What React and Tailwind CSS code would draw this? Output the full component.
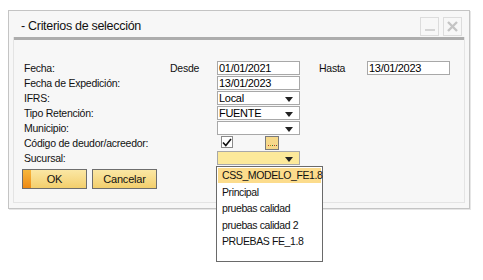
import React from "react";

const font = { fontFamily: '"Liberation Sans", Arial, sans-serif' };

function Arrow() {
  return (
    <svg width="8" height="5" viewBox="0 0 8 5" className="absolute right-[6px] top-[5px]">
      <polygon points="0,0 8,0 4,5" fill="#222" />
    </svg>
  );
}

function Input({ value }) {
  return (
    <div className="h-[14px] w-[83px] border border-[#a8a8a8] bg-white pl-[1px] text-[11px] leading-[12px] tracking-[-0.3px] text-black">
      {value}
    </div>
  );
}

function Select({ value, yellow }) {
  return (
    <div
      className={
        "relative h-[14px] w-[83px] border border-[#a8a8a8] pl-[1px] text-[11px] leading-[12px] tracking-[-0.3px] text-black " +
        (yellow ? "bg-[#fce99a]" : "bg-white")
      }
    >
      {value}
      <Arrow />
    </div>
  );
}

function Row({ label, children }) {
  return (
    <div className="flex h-[15px] items-start">
      <div className="w-[193px] text-[10.5px] leading-[14px] tracking-[-0.25px] text-[#111]">{label}</div>
      {children}
    </div>
  );
}

export default function App() {
  return (
    <div className="h-[280px] w-[483px] bg-white" style={font}>
      <div className="relative ml-[8px] pt-[10px]">
        <div className="w-[462px] border border-[#c4c4c4] bg-[#f7f7f7] shadow-[1px_1px_0_#e6e6e6]">
          {/* title bar */}
          <div className="flex h-[26px] items-center justify-between pl-[12px] pr-[7px]">
            <div className="pt-[4px] text-[12.5px] tracking-[-0.3px] text-[#111]">- Criterios de selección</div>
            <div className="flex gap-[4px] pt-[4px]">
              <div className="relative h-[19px] w-[19px] border border-[#dcdcdc] bg-[#f7f7f7]">
                <div className="absolute bottom-[4px] left-[4px] h-[2px] w-[10px] bg-[#d4d4d4]" />
              </div>
              <div className="flex h-[19px] w-[19px] items-center justify-center border border-[#dcdcdc] bg-[#f7f7f7]">
                <svg width="11" height="11" viewBox="0 0 11 11">
                  <path d="M1 1 L10 10 M10 1 L1 10" stroke="#c4c4c4" strokeWidth="2.4" />
                </svg>
              </div>
            </div>
          </div>
          {/* content */}
          <div className="mx-[4px] mb-[5px] border-x border-b border-[#e4e4e4]">
            <div className="h-[3px] bg-[#adadad]" />
            <div className="pl-[10px] pt-[21px] pb-[13px]">
              <Row
                label={
                  <div className="flex">
                    <span className="w-[146px]">Fecha:</span>
                    <span>Desde</span>
                  </div>
                }
              >
                <Input value="01/01/2021" />
                <div className="w-[19px]" />
                <div className="w-[48px] text-[10.5px] leading-[14px] tracking-[-0.25px] text-[#111]">Hasta</div>
                <Input value="13/01/2023" />
              </Row>
              <Row label="Fecha de Expedición:">
                <Input value="13/01/2023" />
              </Row>
              <Row label="IFRS:">
                <Select value="Local" />
              </Row>
              <Row label="Tipo Retención:">
                <Select value="FUENTE" />
              </Row>
              <Row label="Municipio:">
                <Select value="" />
              </Row>
              <Row label="Código de deudor/acreedor:">
                <div className="ml-[4px] flex h-[12px] w-[12px] items-center justify-center border border-[#8a8a8a] bg-white">
                  <svg width="10" height="9" viewBox="0 0 10 9">
                    <path d="M1 4.5 L3.8 7.5 L9 1" stroke="#111" strokeWidth="1.6" fill="none" />
                  </svg>
                </div>
                <div className="ml-[32px] flex h-[14px] w-[14px] items-end justify-center border border-[#7a7a7a] bg-[#f6d98a] pb-[3px]">
                  <div className="flex gap-[1px]">
                    <div className="h-[1px] w-[1px] bg-[#c0392b]" />
                    <div className="h-[1px] w-[1px] bg-[#b8860b]" />
                    <div className="h-[1px] w-[1px] bg-[#2e7d32]" />
                    <div className="h-[1px] w-[1px] bg-[#c0392b]" />
                    <div className="h-[1px] w-[1px] bg-[#555]" />
                  </div>
                </div>
              </Row>
              <Row label="Sucursal:">
                <Select value="" yellow />
              </Row>
              <div className="mt-[3px] flex gap-[5px]" style={{ marginLeft: "-2px" }}>
                <div className="relative flex h-[20px] w-[65px] items-center justify-center overflow-hidden border border-[#6e6e6e] bg-gradient-to-b from-[#fbe7a4] to-[#f3cf6c] text-[11px] tracking-[-0.2px] text-[#111]">
                  <div className="absolute bottom-0 left-0 top-0 w-[8px] bg-gradient-to-b from-[#f6b73c] to-[#ee8a12]" />
                  <span className="relative">OK</span>
                </div>
                <div className="flex h-[20px] w-[65px] items-center justify-center border border-[#6e6e6e] bg-gradient-to-b from-[#fbe7a4] to-[#f3cf6c] text-[11px] tracking-[-0.2px] text-[#111]">
                  Cancelar
                </div>
              </div>
            </div>
          </div>
        </div>
        {/* dropdown list */}
        <div className="absolute left-[208px] top-[166px] h-[96px] w-[107px] border border-[#6a6a6a] bg-white p-[1px] text-[10.5px] tracking-[-0.4px] text-[#111]">
          <div className="h-[15px] bg-[#fcdc8c] pl-[4px] leading-[15px]">CSS_MODELO_FE1.8</div>
          <div className="mt-[2px] h-[15px] pl-[4px] leading-[15px]">Principal</div>
          <div className="mt-[1px] h-[15px] pl-[4px] leading-[15px]">pruebas calidad</div>
          <div className="mt-[2px] h-[15px] pl-[4px] leading-[15px]">pruebas calidad 2</div>
          <div className="mt-[1px] h-[15px] pl-[4px] leading-[15px]">PRUEBAS FE_1.8</div>
        </div>
      </div>
    </div>
  );
}
